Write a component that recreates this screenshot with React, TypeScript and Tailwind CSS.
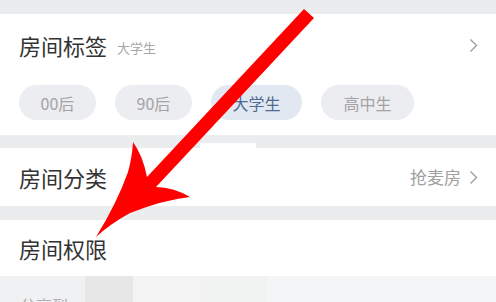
import React from 'react';

const FONT = { fontFamily: '"Noto Sans CJK SC", "Noto Sans", sans-serif' };

const tags = [
    { label: '00后', width: 'w-[77px]', active: false },
    { label: '90后', width: 'w-[77px]', active: false },
    { label: '大学生', width: 'w-[91px]', active: true },
    { label: '高中生', width: 'w-[93px]', active: false },
];

const Chevron: React.FC = () => (
    <svg width="9" height="15" viewBox="0 0 9 15" className="shrink-0">
        <polyline points="1.5,1.5 7.5,7.5 1.5,13.5" fill="none" stroke="#9a9a9a" strokeWidth="1.3" />
    </svg>
);

// red annotation arrow drawn on top of the screenshot
const RedArrow: React.FC = () => (
    <svg width="496" height="302" viewBox="0 0 496 302" className="absolute left-0 top-0 pointer-events-none">
        <path
            d="M 304 9 L 314 18 L 156 187
               Q 173 187 190 197
               Q 163 200 130 213
               Q 110 224 96 237
               Q 117 203 128 172
               Q 132 158 133 142
               Q 143 156 147 177 Z"
            fill="#ff0000"
        />
    </svg>
);

const App: React.FC = () => {
    return (
        <div className="relative w-[496px] h-[302px] overflow-hidden bg-white" style={FONT}>
            <div className="h-[14px] bg-[#ebecee]" />

            {/* 房间标签 */}
            <div className="pl-[19px] pr-[18px] pt-[16px] pb-[15px]">
                <div className="h-[30px] flex items-center justify-between">
                    <div className="flex items-end gap-[10px]">
                        <span className="text-[22px] leading-[30px] text-[#333333]">房间标签</span>
                        <span className="text-[13px] leading-[24px] text-[#a6a6a6]">大学生</span>
                    </div>
                    <Chevron />
                </div>
                <div className="mt-[25px] flex gap-[19px]">
                    {tags.map(t => (
                        <div
                            key={t.label}
                            className={`${t.width} h-[35px] rounded-full flex items-center justify-center text-[16px] ${t.active ? 'bg-[#e2e8f1] text-[#4f6a93]' : 'bg-[#ecedf0] text-[#a3a3a3]'}`}
                        >
                            {t.label}
                        </div>
                    ))}
                </div>
            </div>

            <div className="h-[13px] flex items-end bg-[#ebecee]">
                <div className="w-[200px]" />
                <div className="w-[56px] h-[5px] bg-white" />
            </div>

            {/* 房间分类 */}
            <div className="h-[58px] pl-[19px] pr-[18px] flex items-center justify-between">
                <span className="text-[22px] text-[#333333]">房间分类</span>
                <div className="flex items-center gap-[8px]">
                    <span className="text-[17px] text-[#a0a0a0]">抢麦房</span>
                    <Chevron />
                </div>
            </div>

            <div className="h-[14px] bg-[#ebecee]" />

            {/* 房间权限 */}
            <div className="h-[56px] px-[19px] flex items-center">
                <span className="text-[22px] text-[#333333]">房间权限</span>
            </div>

            {/* 分享到 strip, cut off at the bottom */}
            <div className="h-[26px] flex">
                <div className="w-[85px] bg-[#f0f1f3] pl-[20px] pt-[17px] overflow-hidden">
                    <span className="text-[16px] leading-[20px] text-[#b0b0b0] whitespace-nowrap">分享到</span>
                </div>
                <div className="w-[48px] bg-[#e7e7e7]" />
                <div className="w-[67px] bg-[#f3f3f3]" />
                <div className="w-[67px] bg-[#f1f2f2]" />
                <div className="flex-1 bg-[#f4f5f7]" />
            </div>

            <RedArrow />
        </div>
    );
};

export default App;
